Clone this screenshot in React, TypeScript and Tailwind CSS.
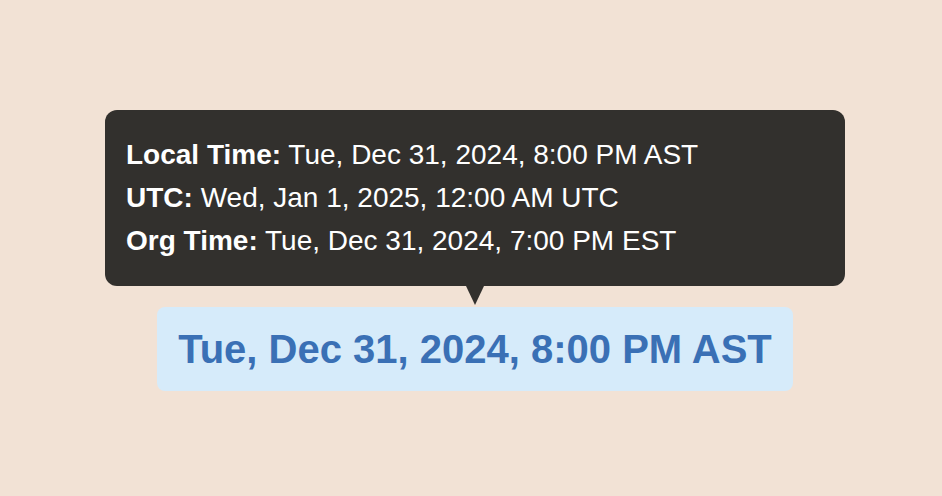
export default function App() {
  return (
    <div
      className="flex h-screen w-full flex-col items-center justify-center bg-[#f2e2d5]"
      style={{ fontFamily: '"Liberation Sans", Arial, sans-serif' }}
    >
      <div className="mt-[5px] ml-[8px] flex flex-col items-center">
        <div className="w-[740px] rounded-xl bg-[#32302d] px-[21px] pt-[23px] pb-[24px] text-[28px] leading-[43px] text-white">
          <div>
            <span className="font-bold">Local Time:</span> Tue, Dec 31, 2024, 8:00 PM AST
          </div>
          <div>
            <span className="font-bold">UTC:</span> Wed, Jan 1, 2025, 12:00 AM UTC
          </div>
          <div>
            <span className="font-bold">Org Time:</span> Tue, Dec 31, 2024, 7:00 PM EST
          </div>
        </div>
        <div className="h-0 w-0 border-x-[9px] border-t-[19px] border-x-transparent border-t-[#32302d]" />
        <div className="mt-[2px] rounded-lg bg-[#d6ebfa] px-[21px] py-[19px] text-[40px] leading-[46px] font-bold text-[#3a70b5]">
          Tue, Dec 31, 2024, 8:00 PM AST
        </div>
      </div>
    </div>
  );
}
